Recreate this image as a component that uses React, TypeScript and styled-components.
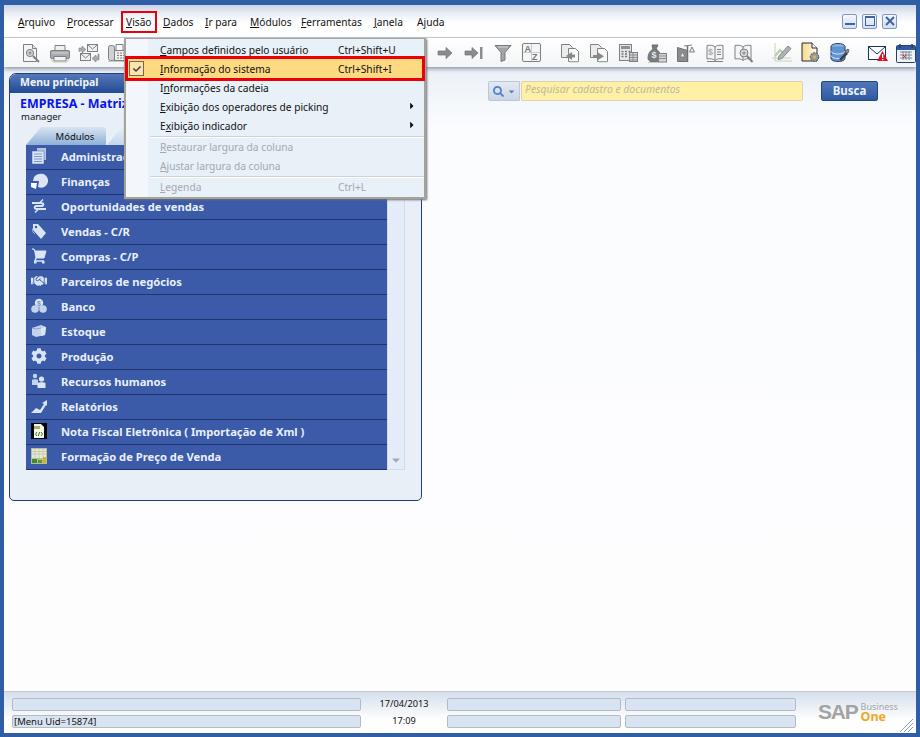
import React from "react";
import styled, { createGlobalStyle } from "styled-components";
import { FaHandshake, FaCog, FaSearch, FaCaretDown, FaCaretRight, FaCheck } from "react-icons/fa";

const Global = createGlobalStyle`
  html, body { margin: 0; padding: 0; background: #2f5da6; }
  * { box-sizing: border-box; }
  u { text-underline-offset: 1px; }
`;

const Frame = styled.div`
  position: relative;
  width: 920px;
  height: 737px;
  display: flex;
  flex-direction: column;
  overflow: hidden;
  border-style: solid;
  border-color: #2f5da6;
  border-width: 5px 4px 4px 4px;
  background: #fdfdfe;
  font-family: "Noto Sans", "Liberation Sans", sans-serif;
  font-size: 10.3px;
  color: #111;
`;

const MenuBar = styled.div`
  height: 33px;
  flex: none;
  display: flex;
  align-items: center;
  padding: 2px 12px 0 14px;
  background: linear-gradient(#c9d3e5 0, #e8edf5 8px, #fff 18px);
  border-bottom: 1px solid #c6cede;
`;

const MenuItem = styled.div<{ $marked?: boolean; $w: number }>`
  width: ${(p) => p.$w}px;
  flex: none;
  white-space: nowrap;
  line-height: 14px;
  font-size: 10.2px;
  span {
    display: inline-block;
    padding: 2px 3px;
    margin-left: -3px;
    ${(p) => (p.$marked ? "outline: 2px solid #e8000b; outline-offset: 0;" : "")}
  }
`;

const WindowButtons = styled.div`
  margin-left: auto;
  display: flex;
  gap: 5px;
  margin-top: -2px;
  margin-right: 7px;
`;

const WindowButton = styled.div`
  width: 15px;
  height: 15px;
  border: 1px solid #7f97c6;
  border-radius: 2px;
  background: linear-gradient(#f4f7fc, #d5dff0);
  display: flex;
  align-items: center;
  justify-content: center;
`;

const Toolbar = styled.div`
  height: 29px;
  flex: none;
  display: flex;
  align-items: center;
  padding-left: 12px;
  background: linear-gradient(#fff, #f3f4f6);
  box-shadow: 0 2px 4px #8f98a8;
  position: relative;
  z-index: 1;
`;

const Tool = styled.div<{ $w?: number; $before?: number }>`
  width: ${(p) => p.$w ?? 29}px;
  margin-left: ${(p) => p.$before ?? 0}px;
  flex: none;
  display: flex;
  justify-content: center;
  align-items: center;
`;

const Main = styled.div`
  flex: 1;
  min-height: 0;
  display: flex;
  align-items: flex-start;
  padding: 6px 0 0 5px;
  background: linear-gradient(#eaf0f8, #fbfcfe 60px, #fdfdfe);
`;

const Panel = styled.div`
  width: 413px;
  height: 428px;
  flex: none;
  background: #e8eff7;
  border: 1px solid #233f7a;
  border-radius: 7px 7px 5px 5px;
  overflow: hidden;
`;

const PanelTitle = styled.div`
  height: 19px;
  padding: 1px 0 0 10px;
  background: linear-gradient(#5478b8, #234a94);
  color: #f2f5fb;
  font-weight: 700;
  font-size: 10.5px;
  line-height: 15px;
`;

const Company = styled.div`
  padding: 2px 0 0 10px;
  color: #0a14e8;
  font-weight: 700;
  font-size: 12.5px;
  line-height: 18px;
`;

const UserName = styled.div`
  padding-left: 11px;
  font-size: 9.5px;
  line-height: 7px;
  color: #111;
`;

const Tabs = styled.div`
  display: flex;
  gap: 1px;
  margin: 7px 0 0 16px;
  height: 18px;
`;

const Tab = styled.div<{ $ghost?: boolean }>`
  width: ${(p) => (p.$ghost ? 60 : 80)}px;
  height: 18px;
  clip-path: polygon(15px 0, calc(100% - 2px) 0, 100% 2px, 100% 100%, 0 100%);
  background: ${(p) => (p.$ghost ? "linear-gradient(#e8eff7, #c4d6ea)" : "linear-gradient(#d9e4f2, #8fb0d8)")};
  text-align: center;
  padding: 2px 0 0 18px;
  font-size: 9.5px;
  line-height: 15px;
`;

const ListWrap = styled.div`
  display: flex;
  margin-left: 16px;
`;

const List = styled.div`
  width: 361px;
  flex: none;
`;

const Row = styled.div`
  height: 25px;
  display: flex;
  align-items: center;
  padding-bottom: 2px;
  background: #3b5ba9;
  border-bottom: 1px solid #1c3570;
  color: #e9effb;
  font-weight: 700;
  font-size: 11.2px;
  white-space: nowrap;
`;

const RowIcon = styled.div`
  width: 35px;
  flex: none;
  display: flex;
  justify-content: center;
  padding-right: 9px;
  font-size: 16px;
  color: #d9e3f4;
`;

const Track = styled.div`
  width: 18px;
  height: 325px;
  flex: none;
  display: flex;
  align-items: flex-end;
  justify-content: center;
  padding-bottom: 3px;
  background: #e3ecf7;
  border: 1px solid #cddcf0;
  border-top: none;
  color: #a3a9b2;
  font-size: 12px;
`;

const Search = styled.div`
  display: flex;
  margin: 8px 0 0 66px;
`;

const SearchType = styled.div`
  width: 32px;
  height: 20px;
  display: flex;
  align-items: center;
  justify-content: center;
  gap: 3px;
  background: linear-gradient(#e4eaf3, #cbd5e5);
  border: 1px solid #bcc6d6;
  border-radius: 2px 0 0 2px;
  color: #4c7fd0;
  font-size: 11px;
  svg + svg { font-size: 9px; color: #5a7fbd; }
`;

const SearchInput = styled.div`
  width: 282px;
  height: 20px;
  margin-left: 1px;
  padding-left: 3px;
  background: #fff0a5;
  border: 1px solid #d8d4b0;
  border-radius: 2px;
  color: #bdb9a0;
  font-style: italic;
  font-size: 10.4px;
  line-height: 15px;
`;

const SearchButton = styled.div`
  width: 57px;
  height: 20px;
  margin-left: 18px;
  background: linear-gradient(#4f76b9, #2f5aa3);
  border: 1px solid #24477f;
  border-radius: 2px;
  color: #eef3fb;
  font-weight: 700;
  font-size: 11.5px;
  line-height: 18px;
  text-align: center;
`;

const Status = styled.div`
  height: 42px;
  flex: none;
  display: flex;
  padding: 6px 0 0 8px;
  background: linear-gradient(#d5dfec, #fff 28px);
  border-top: 1px solid #c3cad4;
  position: relative;
`;

const StatusGrid = styled.div`
  display: grid;
  grid-template-columns: 349px 86px 174px 175px;
  grid-template-rows: 13px 13px;
  row-gap: 4px;
`;

const Field = styled.div<{ $inset?: boolean }>`
  margin-left: ${(p) => (p.$inset ? 4 : 0)}px;
  background: #d9e4f2;
  border: 1px solid #b4bbc2;
  border-radius: 2px;
  padding-left: 1px;
  font-size: 9.5px;
  line-height: 11px;
  white-space: nowrap;
`;

const Stamp = styled.div`
  text-align: center;
  font-size: 9.2px;
  line-height: 12px;
`;

const Logo = styled.div`
  margin-left: 22px;
  margin-top: 1px;
  display: flex;
  align-items: center;
  height: 26px;
`;

const LogoSap = styled.div`
  color: #a3a3a3;
  font-family: "Liberation Sans", sans-serif;
  font-weight: 700;
  font-size: 21px;
  letter-spacing: -1.2px;
  line-height: 22px;
`;

const LogoStack = styled.div`
  margin-left: 3px;
  display: flex;
  flex-direction: column;
`;

const LogoBusiness = styled.span`
  display: block;
  height: 9px;
  color: #a6a6a6;
  font-size: 9px;
  line-height: 9px;
`;

const LogoOne = styled.span`
  display: block;
  height: 12px;
  color: #f0a51e;
  font-size: 12.5px;
  font-weight: 700;
  line-height: 12px;
`;

const Grip = styled.svg`
  position: absolute;
  right: 3px;
  bottom: 1px;
`;

const Dropdown = styled.div`
  position: absolute;
  left: 120px;
  top: 33px;
  width: 302px;
  height: 161px;
  z-index: 5;
  padding-top: 1px;
  border: 2px solid #a5a297;
  border-top-width: 1px;
  background: linear-gradient(90deg, #f3f6fb 22px, #e8f0f8 22px);
  box-shadow: 1px 1px 2px #6a6f78;
`;

const DropRow = styled.div<{ $off?: boolean; $on?: boolean }>`
  position: relative;
  height: 19px;
  display: flex;
  align-items: center;
  padding-left: 34px;
  white-space: nowrap;
  color: ${(p) => (p.$off ? "#a5a9ae" : "#111")};
  font-size: 10.2px;
  ${(p) =>
    p.$on
      ? "background: #fdd982; outline: 3px solid #ec0008; outline-offset: 0; z-index: 1; margin: 0 2px; padding-left: 32px;"
      : ""}
`;

const DropLabel = styled.span`
  width: 178px;
  flex: none;
`;

const Arrow = styled.span`
  position: absolute;
  right: 7px;
  top: 3px;
  font-size: 10px;
  color: #111;
`;

const CheckBox = styled.span`
  position: absolute;
  left: 1px;
  top: 2px;
  width: 15px;
  height: 15px;
  border: 1px solid #6b6a5c;
  background: #fde4a4;
  display: flex;
  align-items: center;
  justify-content: center;
  font-size: 8px;
  color: #33415c;
`;

const Separator = styled.div<{ $h: number }>`
  height: ${(p) => p.$h}px;
  display: flex;
  align-items: center;
  margin-left: 24px;
  &::after { content: ""; flex: 1; height: 1px; background: #cfd3d8; box-shadow: 0 1px 0 #fff; }
`;

const S = "#7d8183";
const F = "#e4e5e5";
const M = "#a8abad";
const G = "#b9d3b0";

const Ico = ({ w = 20, h = 20, children }: { w?: number; h?: number; children: React.ReactNode }) => (
  <svg width={w} height={h} viewBox={`0 0 ${w} ${h}`}>{children}</svg>
);

const Preview = () => (
  <Ico>
    <path d="M2.500 1.500h9l4 4v13h-13z" fill="#f4f4f4" stroke={S} />
    <path d="M11.500 1.500v4h4" fill={F} stroke={S} />
    <circle cx="9" cy="10" r="3.600" fill="#cfd3d4" stroke={S} />
    <circle cx="9" cy="10" r="1.400" fill="#8f9395" />
    <path d="M12 13l6 6" stroke={S} strokeWidth="2" />
  </Ico>
);

const PrinterIco = () => (
  <Ico w={22}>
    <path d="M6 2.500h10v6H6z" fill="#f0f0f0" stroke={S} />
    <rect x="1.500" y="7.500" width="19" height="8" rx="1.500" fill={M} stroke={S} />
    <path d="M3 10h16" stroke="#d8d8d8" />
    <path d="M5 13.500h12v4.500H5z" fill="#f3f3f3" stroke={S} />
    <path d="M2 16l2 3h14l2-3" fill="none" stroke={G} />
  </Ico>
);

const MailSwap = () => (
  <Ico w={23}>
    <rect x="10.500" y="1.500" width="10" height="7" fill="#f0f0f0" stroke={S} />
    <path d="M11 2l4.500 4L20 2" fill="none" stroke={S} />
    <rect x="3.500" y="10.500" width="10" height="7" fill="#f0f0f0" stroke={S} />
    <path d="M4 11l4.500 4L13 11" fill="none" stroke={S} />
    <path d="M2 9V5h3V3l4 3.500L5 10V8" fill={M} stroke={S} strokeWidth=".6" />
    <path d="M21 11v3h-2v-2l-4 3.500 4 3.500v-2h3v-6z" fill={M} stroke={S} strokeWidth=".6" />
  </Ico>
);

const Fax = () => (
  <Ico w={22}>
    <rect x="1.500" y="2.500" width="6" height="15" rx="2" fill="#cfd1d2" stroke={S} />
    <rect x="7.500" y="7.500" width="13" height="10" fill="#efefef" stroke={S} />
    <path d="M9 1.500h7v6H9z" fill="#fafafa" stroke={S} />
    <path d="M10 10h2M13 10h2M16 10h2M10 12.500h2M13 12.500h2M16 12.500h2M10 15h2M13 15h2M16 15h2" stroke={S} />
    <path d="M1 18.500h20" stroke={G} />
  </Ico>
);

const ArrowR = () => (
  <Ico w={16} h={14}>
    <path d="M1 5h8V1.500L15 7l-6 5.500V9H1z" fill="#8a8d8f" stroke="#6f7274" strokeWidth=".7" />
  </Ico>
);

const ArrowBar = () => (
  <Ico w={19} h={14}>
    <path d="M1 5h7V1.500L14 7l-6 5.500V9H1z" fill="#8a8d8f" stroke="#6f7274" strokeWidth=".7" />
    <rect x="16" y="1" width="2.500" height="12" fill="#8a8d8f" />
  </Ico>
);

const FunnelIco = () => (
  <Ico w={18} h={18}>
    <path d="M1 1.500h16l-6 7V16l-4 1.500v-9z" fill="#a2a5a7" stroke="#77797b" />
    <path d="M4 3h10" stroke="#d5d6d7" />
  </Ico>
);

const AzBox = () => (
  <svg width="19" height="19" viewBox="0 0 19 19">
    <rect x=".5" y=".5" width="18" height="18" rx="1.500" fill="#f5f5f5" stroke="#7b7f82" />
    <path d="M1 9.500h17M9.500 1v17" stroke="#c9cbcd" />
    <text x="2.500" y="9" fontFamily="Liberation Sans" fontWeight="700" fontSize="9" fill="#777">A</text>
    <text x="10" y="17" fontFamily="Liberation Sans" fontWeight="700" fontSize="9" fill="#777">Z</text>
  </svg>
);

const DocSwap = ({ back }: { back?: boolean }) => (
  <Ico>
    <path d="M1.500 1.500h8l3 3v10h-11z" fill="#ececec" stroke={S} />
    <path d="M8.500 5.500h7l3 3v10h-10z" fill="#f8f8f8" stroke={S} />
    {back ? (
      <path d="M12 9v2.500h3v3h-3V17l-6-4z" fill="#85898b" />
    ) : (
      <path d="M9 9.500v2.500H4v2.500h5V17l6-3.800z" fill="#85898b" />
    )}
    <path d="M10 19h9" stroke={G} />
  </Ico>
);

const CalcTable = () => (
  <Ico>
    <rect x="1.500" y="1.500" width="12" height="16" fill="#e7e7e7" stroke={S} />
    <rect x="3" y="3" width="9" height="3" fill="#8d9092" />
    <path d="M3.500 8.500h2M7 8.500h2M10.500 8.500h2M3.500 11h2M7 11h2M3.500 13.500h2M7 13.500h2" stroke="#777" strokeWidth="1.500" />
    <rect x="11.500" y="9.500" width="8" height="9" fill="#d6d6d6" stroke={S} />
    <path d="M12 12h7M12 14.500h7M12 17h7M15 10v8" stroke="#8a8d8f" />
  </Ico>
);

const MoneyBag = () => (
  <Ico>
    <path d="M5 2h6l-2 4c3 2 5 5 5 9 0 3-2 4-6 4s-7-1-7-4c0-4 2-7 5-9z" fill="#797d7f" stroke="#6a6e70" />
    <text x="4.600" y="15" fontFamily="Liberation Sans" fontWeight="700" fontSize="9" fill="#e9e9e9">$</text>
    <rect x="11.500" y="10.500" width="8" height="8.500" fill="#d6d6d6" stroke={S} />
    <path d="M12 13h7M12 15.500h7" stroke="#8a8d8f" />
    <path d="M1 19.500h9" stroke={G} />
  </Ico>
);

const ScaleIco = () => (
  <Ico>
    <path d="M1.500 4.500l10 3v11h-10z" fill="#8a8d8f" stroke="#6f7274" />
    <path d="M11.500 3v16" stroke="#6f7274" strokeWidth="1.500" />
    <path d="M6.500 9l-2.500 5h5zM16 4l-2.500 5h5z" fill="#ececec" stroke={S} />
    <path d="M8 3l8-1" stroke={S} />
  </Ico>
);

const BookDollar = () => (
  <Ico>
    <path d="M10 4c-2-2-5-2-8-1.500V16c3-.5 6-.5 8 1.500 2-2 5-2 8-1.500V2.500C15 2 12 2 10 4z" fill="#f4f4f4" stroke={S} />
    <path d="M10 4v13.500M12 6.500h4M12 9h4M12 11.500h4" stroke={S} />
    <text x="3" y="12" fontFamily="Liberation Sans" fontWeight="700" fontSize="9" fill={M}>$</text>
    <path d="M2 18.500h16" stroke={S} />
  </Ico>
);

const BookSearch = () => (
  <Ico w={21}>
    <path d="M10 4c-2-2-5-2-8-1.500V16c3-.5 6-.5 8 1.500 2-2 5-2 8-1.500V2.500C15 2 12 2 10 4z" fill="#f4f4f4" stroke={S} />
    <path d="M10 4v13" stroke={S} />
    <circle cx="11" cy="10" r="4" fill="#d4d6d7" stroke={S} />
    <circle cx="11" cy="10" r="1.500" fill="#8f9395" />
    <path d="M14 13l5.500 6" stroke={S} strokeWidth="2" />
  </Ico>
);

const DocGear = () => (
  <svg width="20" height="21" viewBox="0 0 20 21">
    <defs>
      <linearGradient id="dg" x1="0" x2="1"><stop offset="0" stopColor="#f5d98a" /><stop offset="1" stopColor="#fdfaf0" /></linearGradient>
    </defs>
    <path d="M1 1h10l5 5v13H1z" fill="url(#dg)" stroke="#26282c" />
    <path d="M11 1v5h5" fill="#fff" stroke="#26282c" />
    <circle cx="13.500" cy="15" r="4.300" fill="#8d98a6" stroke="#555" strokeDasharray="2 1" />
    <circle cx="13.500" cy="15" r="1.800" fill="#e2b52c" />
  </svg>
);

const DbTool = () => (
  <svg width="20" height="20" viewBox="0 0 20 20">
    <ellipse cx="8" cy="3.500" rx="7" ry="3" fill="#8db4e2" stroke="#23406f" />
    <path d="M1 3.500v12c0 1.600 3 3 7 3s7-1.400 7-3v-12" fill="#5f93d1" stroke="#23406f" />
    <path d="M1 8c0 1.600 3 3 7 3s7-1.400 7-3M1 12.500c0 1.600 3 3 7 3s7-1.400 7-3" fill="none" stroke="#dce8f6" />
    <path d="M10 17l7-7" stroke="#3e4144" strokeWidth="2.500" />
    <path d="M15.500 7.500l2.500-1.500 1 1-1 3-2 .5z" fill="#8a9099" stroke="#3e4144" strokeWidth=".7" />
  </svg>
);

const MailAlert = () => (
  <svg width="20" height="18" viewBox="0 0 20 18">
    <rect x=".5" y="2.500" width="17" height="13" fill="#fff" stroke="#1d3556" />
    <path d="M1 3l8 7 8-7" fill="none" stroke="#1d3556" />
    <path d="M14.500 7L20 17H9z" fill="#e01020" />
    <rect x="14" y="10" width="1.300" height="4" fill="#fff" />
    <rect x="14" y="15" width="1.300" height="1.300" fill="#fff" />
  </svg>
);

const Calendar = () => (
  <svg width="20" height="20" viewBox="0 0 20 20">
    <rect x=".5" y="2.500" width="19" height="17" rx="1" fill="#eef1f6" stroke="#23406f" />
    <rect x="1" y="3" width="18" height="4" fill="#2e5ba6" />
    <path d="M4 1v4M16 1v4" stroke="#23406f" strokeWidth="1.500" />
    <path d="M4 9h12M4 12h12M4 15h12M7 8v9M10 8v9M13 8v9" stroke="#7f8a99" />
    <path d="M7 12l3 3M10 12l-3 3" stroke="#d8232a" />
  </svg>
);

const PencilChart = () => (
  <svg width="20" height="21" viewBox="0 0 20 21" fill="none">
    <path d="M3 1v18h17M0 16h19" stroke="#c5d2bd" />
    <path d="M3 14l5-6 3 3" stroke="#b5cfa9" strokeWidth="2" />
    <path d="M7 14l9-10 3 2.500-9 10-4 1z" fill="#b0b4b7" stroke="#85898c" />
  </svg>
);

const L = "#dbe5f5";

const RDocs = () => (
  <Ico w={16} h={18}>
    <rect x="6" y="1" width="9" height="12" fill="#b8c6e0" />
    <rect x="1" y="4" width="12" height="13" fill={L} stroke="#3b5ba9" strokeWidth=".5" />
    <path d="M3 7h8M3 9.500h8M3 12h8M3 14.500h8" stroke="#7f93c4" />
  </Ico>
);
const RPie = () => (
  <Ico w={18} h={18}>
    <path d="M9 2a7 7 0 1 1-1 13l1-6H3a7 7 0 0 1 6-7z" fill={L} />
    <path d="M1 11h6l-1 6-5-2z" fill="#fff" />
  </Ico>
);
const RSwap = () => (
  <Ico w={16} h={16}>
    <path d="M1 5h9c3 0 3 2 1 3H5c-2 1-2 3 1 3h9" stroke={L} strokeWidth="2" fill="none" />
    <path d="M12 1.500L8.500 5M4 14.500L7.500 11" stroke={L} strokeWidth="1.500" fill="none" />
  </Ico>
);
const RTag = () => (
  <Ico w={16} h={18}>
    <path d="M2 2h5l8 9-5 6-8-9z" fill={L} />
    <circle cx="5" cy="5" r="1.200" fill="#3b5ba9" />
    <path d="M2 6c-1 3 0 5 2 6" stroke="#aab9da" fill="none" />
  </Ico>
);
const RCart = () => (
  <Ico w={16} h={16}>
    <path d="M1 1h2l1 2h11l-2 7H5L3.500 2" fill={L} stroke={L} />
    <path d="M5 10l-1 3h9" stroke={L} strokeWidth="1.500" fill="none" />
    <rect x="3" y="13" width="2.500" height="2.500" fill={L} />
    <rect x="11" y="13" width="2.500" height="2.500" fill={L} />
  </Ico>
);
const RCoins = () => (
  <Ico w={16} h={16}>
    <circle cx="8" cy="5" r="4.200" fill={L} />
    <circle cx="4" cy="11" r="3.800" fill="#c4d2ea" />
    <circle cx="12" cy="11" r="3.800" fill="#c4d2ea" />
    <text x="6" y="8" fontFamily="Liberation Sans" fontSize="7" fill="#7f93c4">$</text>
  </Ico>
);
const RBox = () => (
  <Ico w={16} h={14}>
    <path d="M1 4l9-3 5 2-1 8-9 2-4-2z" fill="#c4d2ea" />
    <path d="M10 4l5-1-1 8-4 1z" fill={L} />
    <path d="M1 4l4 1 5-1" stroke="#8ea2cd" fill="none" />
  </Ico>
);
const RUsers = () => (
  <Ico w={16} h={16}>
    <circle cx="4" cy="3" r="2.200" fill="#c4d2ea" />
    <path d="M1 7c0-1 6-1 6 0v5H1z" fill="#c4d2ea" />
    <circle cx="10.500" cy="6" r="2.600" fill={L} />
    <path d="M6.500 10c1-1 7-1 8 0v5h-8z" fill={L} />
  </Ico>
);
const RChart = () => (
  <Ico w={16} h={15}>
    <path d="M0 14l5-5 4 2 4-6-2-1 5-3v6l-1-1-5 8H0z" fill={L} />
  </Ico>
);

const Nfe = () => (
  <svg width="16" height="16" viewBox="0 0 16 16">
    <rect width="16" height="16" fill="#050505" />
    <path d="M3 1h7l3 3v11H3z" fill="#f4f6e8" />
    <rect x="3" y="3" width="6" height="3" fill="#a3b46a" />
    <path d="M6 9l-1.500 2L6 13M10 9l1.500 2L10 13M8.600 9l-1.200 4" stroke="#3f7a2c" fill="none" />
  </svg>
);

const Price = () => (
  <svg width="16" height="16" viewBox="0 0 16 16">
    <rect width="16" height="16" fill="#b7bf9a" />
    <rect x="1" y="1" width="14" height="9" fill="#e6e9d8" />
    <path d="M1 3.500h14M1 6h14M4 1v9M8 1v9M12 1v9" stroke="#c6ccb0" />
    <rect x="1" y="11" width="5" height="4" fill="#3f8a2c" />
    <rect x="7" y="12" width="4" height="3" fill="#5b9a2c" />
    <rect x="12" y="9" width="3" height="6" fill="#d2b41c" />
  </svg>
);

const menuItems: [string, string, number, boolean?][] = [
  ["A", "rquivo", 49], ["P", "rocessar", 59], ["V", "isão", 37, true], ["D", "ados", 42], ["I", "r para", 45], ["M", "ódulos", 51], ["F", "erramentas", 73], ["J", "anela", 43], ["Aj", "uda", 40],
];

const rows: [React.ReactNode, string][] = [
  [<RDocs />, "Administração"],
  [<RPie />, "Finanças"],
  [<RSwap />, "Oportunidades de vendas"],
  [<RTag />, "Vendas - C/R"],
  [<RCart />, "Compras - C/P"],
  [<FaHandshake />, "Parceiros de negócios"],
  [<RCoins />, "Banco"],
  [<RBox />, "Estoque"],
  [<FaCog />, "Produção"],
  [<RUsers />, "Recursos humanos"],
  [<RChart />, "Relatórios"],
  [<Nfe />, "Nota Fiscal Eletrônica ( Importação de Xml )"],
  [<Price />, "Formação de Preço de Venda"],
];

const U = ({ a, b }: { a: string; b: string }) => (
  <>
    <u>{a}</u>
    {b}
  </>
);

export default function App() {
  return (
    <Frame>
      <Global />
      <MenuBar>
        {menuItems.map(([a, b, w, m]) => (
          <MenuItem key={b} $w={w} $marked={m}>
            <span>
              {a === "Aj" ? (
                <>
                  A<u>j</u>
                  {b}
                </>
              ) : (
                <U a={a} b={b} />
              )}
            </span>
          </MenuItem>
        ))}
        <WindowButtons>
          <WindowButton>
            <svg width="10" height="10"><rect x="0" y="7" width="10" height="2" fill="#3d64a8" /></svg>
          </WindowButton>
          <WindowButton>
            <svg width="10" height="10"><rect x=".5" y=".5" width="9" height="9" fill="none" stroke="#3d64a8" /><rect x="0" y="0" width="10" height="2" fill="#3d64a8" /></svg>
          </WindowButton>
          <WindowButton>
            <svg width="10" height="10"><path d="M1 1l8 8M9 1L1 9" stroke="#3d64a8" strokeWidth="2" /></svg>
          </WindowButton>
        </WindowButtons>
      </MenuBar>
      <Toolbar>
        <Tool><Preview /></Tool>
        <Tool><PrinterIco /></Tool>
        <Tool><MailSwap /></Tool>
        <Tool><Fax /></Tool>
        <Tool $before={299} $w={28}><ArrowR /></Tool>
        <Tool $w={29}><ArrowBar /></Tool>
        <Tool><FunnelIco /></Tool>
        <Tool $w={28}><AzBox /></Tool>
        <Tool $before={10}><DocSwap back /></Tool>
        <Tool><DocSwap /></Tool>
        <Tool><CalcTable /></Tool>
        <Tool><MoneyBag /></Tool>
        <Tool><ScaleIco /></Tool>
        <Tool><BookDollar /></Tool>
        <Tool><BookSearch /></Tool>
        <Tool $before={9}><PencilChart /></Tool>
        <Tool><DocGear /></Tool>
        <Tool><DbTool /></Tool>
        <Tool $before={9}><MailAlert /></Tool>
        <Tool $w={28}><Calendar /></Tool>
      </Toolbar>
      <Main>
        <Panel>
          <PanelTitle>Menu principal</PanelTitle>
          <Company>EMPRESA - Matriz</Company>
          <UserName>manager</UserName>
          <Tabs>
            <Tab>Módulos</Tab>
            <Tab $ghost />
          </Tabs>
          <ListWrap>
            <List>
              {rows.map(([icon, label]) => (
                <Row key={label}>
                  <RowIcon>{icon}</RowIcon>
                  {label}
                </Row>
              ))}
            </List>
            <Track><FaCaretDown /></Track>
          </ListWrap>
        </Panel>
        <Search>
          <SearchType><FaSearch /><FaCaretDown /></SearchType>
          <SearchInput>Pesquisar cadastro e documentos</SearchInput>
          <SearchButton>Busca</SearchButton>
        </Search>
      </Main>
      <Status>
        <StatusGrid>
          <Field />
          <Stamp>17/04/2013</Stamp>
          <Field />
          <Field $inset />
          <Field>[Menu Uid=15874]</Field>
          <Stamp>17:09</Stamp>
          <Field />
          <Field $inset />
        </StatusGrid>
        <Logo>
          <LogoSap>SAP</LogoSap>
          <LogoStack>
            <LogoBusiness>Business</LogoBusiness>
            <LogoOne>One</LogoOne>
          </LogoStack>
        </Logo>
        <Grip width="14" height="14" viewBox="0 0 14 14">
          <path d="M1 14L14 1M5 14L14 5M9 14l5-5" stroke="#8d9fbd" fill="none" />
        </Grip>
      </Status>
      <Dropdown>
        <DropRow><DropLabel><U a="C" b="ampos definidos pelo usuário" /></DropLabel>Ctrl+Shift+U</DropRow>
        <DropRow $on><CheckBox><FaCheck /></CheckBox><DropLabel><U a="I" b="nformação do sistema" /></DropLabel>Ctrl+Shift+I</DropRow>
        <DropRow><DropLabel>I<u>n</u>formações da cadeia</DropLabel></DropRow>
        <DropRow><DropLabel><U a="E" b="xibição dos operadores de picking" /></DropLabel><Arrow><FaCaretRight /></Arrow></DropRow>
        <DropRow><DropLabel>E<u>x</u>ibição indicador</DropLabel><Arrow><FaCaretRight /></Arrow></DropRow>
        <Separator $h={2} />
        <DropRow $off><DropLabel><U a="R" b="estaurar largura da coluna" /></DropLabel></DropRow>
        <DropRow $off><DropLabel><U a="A" b="justar largura da coluna" /></DropLabel></DropRow>
        <Separator $h={2} />
        <DropRow $off><DropLabel><U a="L" b="egenda" /></DropLabel>Ctrl+L</DropRow>
      </Dropdown>
    </Frame>
  );
}
